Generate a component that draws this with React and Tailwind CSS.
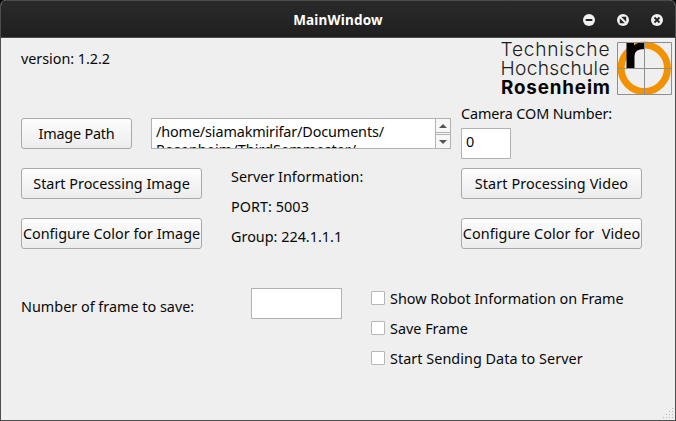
const text = "font-['Noto_Sans',sans-serif] text-[14.4px] leading-[18px] text-[#080808] whitespace-pre";

function Label({ className = "", children }) {
  return <span className={`${text} block ${className}`}>{children}</span>;
}

function Button({ className = "", textClass = "", children }) {
  return (
    <button
      className={`flex h-[31px] shrink-0 items-center justify-center rounded-[3px] border border-[#a9a9a9] bg-linear-to-b from-[#fdfdfd] to-[#ececec] ${className}`}
    >
      <span className={`${text} ${textClass}`}>{children}</span>
    </button>
  );
}

function CheckRow({ textClass = "", children }) {
  return (
    <label className="flex h-[30px] items-start gap-[5px]">
      <span className="mt-[3px] size-[14px] shrink-0 rounded-[1px] border border-[#b7b7b7] bg-white" />
      <span className={`${text} mt-[2px] ${textClass}`}>{children}</span>
    </label>
  );
}

function WindowButton({ children }) {
  return (
    <svg width="12" height="12" viewBox="0 0 12 12">
      <circle cx="6" cy="6" r="6" fill="#f2f1ef" />
      {children}
    </svg>
  );
}

function TitleBar() {
  return (
    <header className="grid h-[38px] grid-cols-[1fr_auto_1fr] items-center border-t border-b border-[#4b4b4b] bg-linear-to-b from-[#2a2a2a] to-[#1f1f1f]">
      <span />
      <h1 className="mt-[2px] font-['Noto_Sans',sans-serif] text-[13.5px] leading-[18px] font-bold tracking-[0.2px] text-white">
        MainWindow
      </h1>
      <div className="mt-[1px] flex justify-end gap-[22px] pr-[12px]">
        <WindowButton>
          <path d="M2.700 6H9.300" stroke="#242424" strokeWidth="1.8" />
        </WindowButton>
        <WindowButton>
          <path d="M4.200 2.800H9.200V7.800ZM2.800 4.200L7.800 9.200H2.800Z" fill="#242424" />
        </WindowButton>
        <WindowButton>
          <path d="M3.500 3.500L8.500 8.500M8.500 3.500L3.500 8.500" stroke="#242424" strokeWidth="1.8" />
        </WindowButton>
      </div>
    </header>
  );
}

function Logo() {
  return (
    <svg width="173" height="58" viewBox="500 40 173 58" className="shrink-0">
      <g fontFamily="Inter, 'Liberation Sans', sans-serif" fontSize="19.200" fontWeight="300" fill="#1c1c1c">
        <text x="500.500" y="56" textLength="109">Technische</text>
        <text x="500.500" y="75" textLength="109">Hochschule</text>
      </g>
      <text x="501" y="94.200" textLength="109" fontFamily="Inter, 'Liberation Sans', sans-serif" fontSize="18.800" fontWeight="700" fill="#050505">
        Rosenheim
      </text>
      <circle cx="644.3" cy="68.3" r="23.2" fill="none" stroke="#f39200" strokeWidth="7" />
      <path d="M626.500 42H634V45.500Q637.500 42 644.200 42V49Q634.500 49 634.500 56V68H626.500Z" fill="#050505" />
      <path d="M617.500 42.500H671.500V94.500H617.500ZM644.500 42.500V94.500M617.500 68.500H671.500" fill="none" stroke="#8e8e8e" />
    </svg>
  );
}

function PathBox() {
  return (
    <div className="flex h-[31px] w-[300px] border border-[#b2b2b2] bg-white">
      <div className="h-[29px] flex-1 overflow-hidden pt-[4px] pl-[4px]">
        <Label className="leading-[17px] tracking-[-0.13px]">/home/siamakmirifar/Documents/</Label>
        <Label className="leading-[17px] tracking-[0.06px]">Rosenheim/ThirdSemmester/</Label>
      </div>
      <div className="flex w-[15px] flex-col justify-between border-l border-[#b2b2b2] bg-[#f7f7f7]">
        <div className="flex h-[14px] items-center justify-center border-b border-[#b2b2b2]">
          <svg width="8" height="4" viewBox="0 0 8 4">
            <path d="M0 4L4 0L8 4Z" fill="#555" />
          </svg>
        </div>
        <div className="flex h-[14px] items-center justify-center border-t border-[#b2b2b2]">
          <svg width="8" height="4" viewBox="0 0 8 4">
            <path d="M0 0L4 4L8 0Z" fill="#555" />
          </svg>
        </div>
      </div>
    </div>
  );
}

function SizeGrip() {
  return (
    <svg width="12" height="12" viewBox="0 0 12 12" fill="#b5b5b5">
      <path d="M9 0h1v1h-1zM6 3h1v1h-1zM9 3h1v1h-1zM3 6h1v1h-1zM6 6h1v1h-1zM9 6h1v1h-1zM0 9h1v1h-1zM3 9h1v1h-1zM6 9h1v1h-1zM9 9h1v1h-1z" />
    </svg>
  );
}

export default function App() {
  return (
    <div className="h-[421px] w-[676px] bg-black">
      <div className="flex h-full flex-col overflow-hidden rounded-t-[6px] border-x border-b border-[#4d4d4d] bg-[#efefef]">
        <TitleBar />
        <div className="flex h-[60px] justify-between pt-[2px] pr-[2px] pl-5">
          <Label className="mt-[10px] tracking-[-0.05px]">version: 1.2.2</Label>
          <Logo />
        </div>
        <div className="flex h-[190px] gap-[10px] pl-5">
          <div className="w-[430px] pt-5">
            <div className="flex gap-[19px]">
              <Button className="w-[111px]" textClass="tracking-[-0.2px]">Image Path</Button>
              <PathBox />
            </div>
            <div className="mt-[19px] flex gap-[29px]">
              <div className="flex flex-col gap-[19px]">
                <Button className="w-[181px]">Start Processing Image</Button>
                <Button className="w-[181px]">Configure Color for Image</Button>
              </div>
              <div className="flex flex-col gap-3">
                <Label>Server Information:</Label>
                <Label className="tracking-[0.05px]">PORT: 5003</Label>
                <Label>Group: 224.1.1.1</Label>
              </div>
            </div>
          </div>
          <div className="flex flex-col">
            <Label className="mt-[7px] w-[151px] tracking-[-0.12px]">Camera COM Number:</Label>
            <div className="mt-[5px] h-[31px] w-[50px] border border-[#b2b2b2] bg-white pt-[4px] pl-[4px]">
              <Label>0</Label>
            </div>
            <Button className="mt-[9px] w-[181px]" textClass="tracking-[0.1px]">Start Processing Video</Button>
            <Button className="mt-[19px] w-[181px]" textClass="tracking-[0.07px]">{"Configure Color for  Video"}</Button>
          </div>
        </div>
        <div className="flex h-[120px] pl-5">
          <Label className="mt-[10px] w-[230px]">Number of frame to save:</Label>
          <div className="h-[31px] w-[91px] border border-[#b2b2b2] bg-white" />
          <div className="ml-[29px] flex flex-col">
            <CheckRow>Show Robot Information on Frame</CheckRow>
            <CheckRow>Save Frame</CheckRow>
            <CheckRow textClass="tracking-[0.04px]">Start Sending Data to Server</CheckRow>
          </div>
        </div>
        <div className="flex flex-1 items-start justify-end">
          <SizeGrip />
        </div>
      </div>
    </div>
  );
}
